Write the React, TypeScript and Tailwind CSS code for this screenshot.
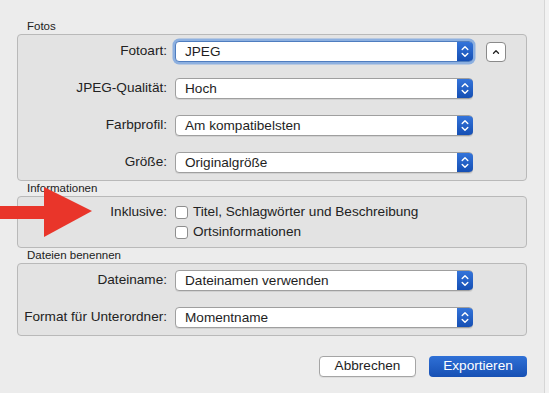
import React from "react";

function Stepper() {
  return (
    <div className="w-[16px] h-full rounded-r-[4px] bg-gradient-to-b from-[#3474da] to-[#154fb4] flex items-center justify-center -mr-px">
      <svg width="16" height="21" viewBox="0 0 16 21" fill="none">
        <path d="M5.2 8.6 L8 5.8 L10.8 8.6" stroke="white" strokeWidth="1.4" strokeLinecap="round" strokeLinejoin="round" />
        <path d="M5.2 12.4 L8 15.2 L10.8 12.4" stroke="white" strokeWidth="1.4" strokeLinecap="round" strokeLinejoin="round" />
      </svg>
    </div>
  );
}

function Popup({ value, focused }: { value: string; focused?: boolean }) {
  return (
    <div
      className={
        "w-[298px] h-[21px] bg-white rounded-[4px] border flex items-stretch " +
        (focused
          ? "border-[#4f7dbf] shadow-[0_0_0_2.5px_#8db0e0]"
          : "border-[#9f9f9f] shadow-[0_1px_0_rgba(0,0,0,0.08)]")
      }
    >
      <div className="flex-1 pl-[9px] flex items-center text-[13.6px] leading-none text-[#1e1e1e]">{value}</div>
      <Stepper />
    </div>
  );
}

function Row({ label, value, focused, extra }: { label: string; value: string; focused?: boolean; extra?: React.ReactNode }) {
  return (
    <div className="flex items-center h-[21px]">
      <div className="w-[149px] text-right text-[13.6px] text-[#222] whitespace-nowrap">{label}</div>
      <div className="ml-[8px]">
        <Popup value={value} focused={focused} />
      </div>
      {extra}
    </div>
  );
}

function Checkbox({ label }: { label: string }) {
  return (
    <div className="flex items-center h-[18px]">
      <div className="w-[13px] h-[13px] bg-white border border-[#8e8e8e] rounded-[3px]" />
      <span className="ml-[5px] text-[13.6px] text-[#222]">{label}</span>
    </div>
  );
}

function SectionLabel({ text }: { text: string }) {
  return <div className="pl-[10px] text-[11.5px] leading-[15px] text-[#222]">{text}</div>;
}

export default function App() {
  return (
    <div
      className="w-[549px] h-[393px] bg-[#ececec] flex overflow-hidden relative"
      style={{ fontFamily: '"Liberation Sans", Arial, sans-serif' }}
    >
      <div className="w-[545px] h-full border-r border-[#d6d6d6]">
        <div className="pl-[17px] pt-[19px] w-[527px]">
          <SectionLabel text="Fotos" />
          <div className="border border-[#b9b9b9] rounded-[4px] bg-[#e3e3e3] pt-[6px] pb-[7px] flex flex-col gap-[16px]">
            <Row
              label="Fotoart:"
              value="JPEG"
              focused
              extra={
                <div className="ml-[13px] w-[20px] h-[20px] bg-white border border-[#8a8a8a] rounded-[4px] flex items-center justify-center">
                  <svg width="10" height="10" viewBox="0 0 10 10" fill="none">
                    <path d="M2.5 6.2 L5 3.7 L7.5 6.2" stroke="#222" strokeWidth="1.3" strokeLinecap="round" strokeLinejoin="round" />
                  </svg>
                </div>
              }
            />
            <Row label="JPEG-Qualität:" value="Hoch" />
            <Row label="Farbprofil:" value="Am kompatibelsten" />
            <Row label="Größe:" value="Originalgröße" />
          </div>
          <SectionLabel text="Informationen" />
          <div className="border border-[#b9b9b9] rounded-[4px] bg-[#e3e3e3] pt-[6px] pb-[6px] flex">
            <div className="w-[149px] h-[18px] flex items-center justify-end text-[13.6px] text-[#222]">Inklusive:</div>
            <div className="ml-[8px] flex flex-col gap-[2px]">
              <Checkbox label="Titel, Schlagwörter und Beschreibung" />
              <Checkbox label="Ortsinformationen" />
            </div>
          </div>
          <SectionLabel text="Dateien benennen" />
          <div className="border border-[#b9b9b9] rounded-[4px] bg-[#e3e3e3] pt-[6px] pb-[7px] flex flex-col gap-[16px]">
            <Row label="Dateiname:" value="Dateinamen verwenden" />
            <Row label="Format für Unterordner:" value="Momentname" />
          </div>
          <div className="mt-[20px] flex justify-end gap-[13px]">
            <div className="w-[97px] h-[21px] bg-white border border-[#a5a5a5] rounded-[4px] flex items-center justify-center text-[13.6px] text-[#1e1e1e] shadow-[0_1px_0_rgba(0,0,0,0.06)]">
              Abbrechen
            </div>
            <div className="w-[98px] h-[21px] bg-gradient-to-b from-[#2f70d6] to-[#1650b4] rounded-[4px] flex items-center justify-center text-[13.6px] text-white">
              Exportieren
            </div>
          </div>
        </div>
      </div>
      <div className="flex-1 bg-[#f2f2f2]" />
      <svg className="absolute left-0 top-0" width="100" height="250" viewBox="0 0 100 250">
        <rect x="0" y="206" width="46" height="13" fill="#e9352a" />
        <polygon points="44,187 92,211 44,237" fill="#e9352a" />
      </svg>
    </div>
  );
}
